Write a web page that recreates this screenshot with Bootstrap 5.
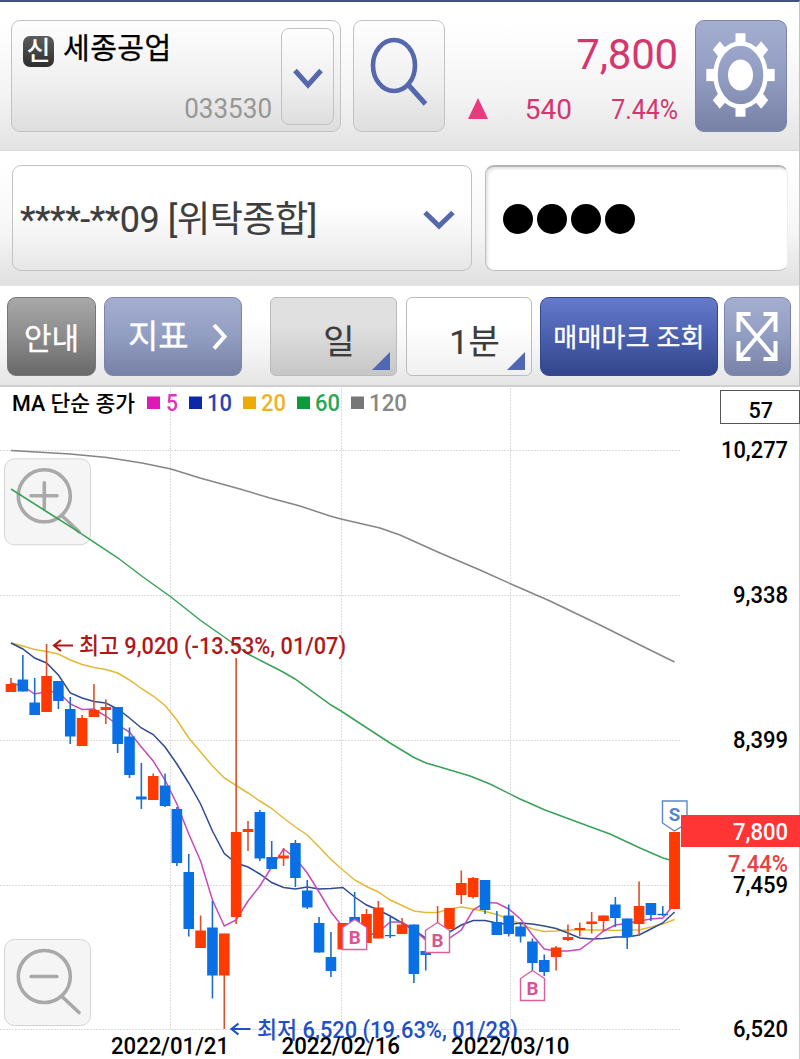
<!DOCTYPE html>
<html lang="ko">
<head>
<meta charset="utf-8">
<meta name="viewport" content="width=device-width, initial-scale=1">
<title>세종공업 차트</title>
<link href="https://cdn.jsdelivr.net/npm/bootstrap@5.3.0/dist/css/bootstrap.min.css" rel="stylesheet">
<style>
body{width:800px;height:1059px;overflow:hidden;background:#fff;font-family:Roboto,"Noto Sans CJK KR",sans-serif;color:#000;line-height:1}
.bar{border-right:1px solid #c4c4c4}
.bar-quote{height:150px;border-top:2px solid #44517f;padding:18px 12px 0 11px;gap:12px;background:linear-gradient(#fff 15%,#f3f3f3 65%,#e3e3e3)}
.bar-account{height:135px;border-top:1px solid #d8d8d8;padding:14px 11px 0 12px;background:linear-gradient(#fff 10%,#f6f6f6 60%,#e0e0e0)}
.bar-tools{height:102px;border-top:1px solid #e6e6e6;border-bottom:2px solid #d0d0d0;padding:11px 9px 0 7px;background:linear-gradient(#fff 30%,#f5f5f5 65%,#e4e4e4)}
.soft{border:1px solid #c2c2c2;border-radius:9px;background:linear-gradient(#fefefe,#f0f0f0 55%,#dedede);padding:0;flex:none}
.stock{width:330px;height:112px;padding:7px 6px 7px 11px}
.tag-new{width:31px;height:31px;border-radius:7px;background:linear-gradient(#5c5c5c,#2e2e2e);color:#fff;font-size:26px;line-height:31px;margin-top:8px;font-weight:500}
.stock-title{font-size:29px;line-height:42px;letter-spacing:.5px;margin-left:9px;-webkit-text-stroke:.3px #000}
.stock-code{font-size:27px;line-height:28px;color:#979797;transform:scaleX(.965);transform-origin:right;margin-right:9px;margin-bottom:1px}
.drop{width:53px;height:97px;border-radius:8px}
.find{width:92px;height:112px}
.price{width:226px;height:112px;color:#d4376f;padding-right:5px;flex:none}
.price-now{font-size:42px;line-height:42px;margin-top:14px;letter-spacing:-.2px}
.price-sub{font-size:28px;line-height:28px;margin-top:20px}
.rise{margin-left:11px;margin-bottom:3px}
.pct{transform:scaleX(.89);transform-origin:right;display:inline-block}
.steel{border:1px solid #7b86af;background:linear-gradient(#a3aed0,#929dc2 50%,#7881a6);color:#fff;border-radius:9px;padding:0;flex:none}
.gear{width:92px;height:112px}
.account{width:460px;height:106px;background:linear-gradient(#fff 40%,#f3f3f3 70%,#e6e6e6);padding:0 16px 0 7px;color:#3e3e3e;font-size:36px}
.account-name{letter-spacing:-.45px;padding-top:3px;-webkit-text-stroke:.15px #3e3e3e}
.pin{width:303px;height:106px;margin-left:13px;border:1px solid #bdbdbd;border-right-color:#eee;border-top:2px solid #b4b4b4;border-radius:9px;background:#fff;padding-left:17px;gap:4px;box-shadow:inset 2px 2px 3px #e4e4e4}
.dot{width:30px;height:30px;background:#000;border-radius:50%}
.tool{height:79px;border-radius:9px;color:#fff;font-size:30px;padding:0;flex:none}
.info{width:89px;border:1px solid #777;background:linear-gradient(#a9a9a9,#8b8b8b 50%,#696969)}
.indi{width:138px;margin-left:8px}
.day{width:127px;margin-left:28px;border-radius:6px;border:1px solid #bbb;background:linear-gradient(#e0e0e0 35%,#c6c6c6);color:#3c3c3c;font-size:34px}
.minute{width:126px;margin-left:9px;border-radius:6px;border:1px solid #bbb;background:linear-gradient(#fff 35%,#f0f0f0);color:#3c3c3c;font-size:34px}
.day span,.minute span{display:inline-block;padding:11px 0 0 11px;-webkit-text-stroke:.2px #3c3c3c}
.corner{right:6px;bottom:5px;width:18px;height:18px;background:#5068b4;clip-path:polygon(100% 0,100% 100%,0 100%)}
.marks{width:178px;margin-left:8px;border:1px solid #34488e;background:linear-gradient(#657acb,#4a5fae 50%,#32458b)}
.marks span{font-size:26px;letter-spacing:.2px;-webkit-text-stroke:.35px #fff}
.t-info,.t-indi{-webkit-text-stroke:.3px #fff}
.t-info{display:inline-block;padding-top:3px}
.full{width:67px;margin-left:6px}
#chart{height:672px;width:800px}
#chart text{font-family:Roboto,"Noto Sans CJK KR",sans-serif;font-weight:500}
</style>
<script src="https://cdn.jsdelivr.net/npm/bootstrap@5.3.0/dist/js/bootstrap.bundle.min.js"></script>
</head>
<body class="d-flex flex-column">
<header class="bar bar-quote d-flex flex-shrink-0">
  <div class="soft stock d-flex">
    <div class="d-flex flex-column flex-grow-1">
      <div class="d-flex"><span class="tag-new text-center">신</span><span class="stock-title">세종공업</span></div>
      <span class="stock-code ms-auto mt-auto">033530</span>
    </div>
    <button class="btn soft drop d-flex align-items-center justify-content-center" aria-label="종목 목록"><svg class="mt-1" width="32" height="24" viewBox="0 0 32 24" fill="none" stroke="#5568ad" stroke-width="5"><path d="M3 3.500 16 18 29 3.500"/></svg></button>
  </div>
  <button class="btn soft find" aria-label="검색"><svg width="90" height="110" viewBox="354 21 90 110" fill="none" stroke="#5568ad" stroke-width="4.600"><ellipse cx="394" cy="65.500" rx="21" ry="25.500"/><path d="M408 84.500 425.500 104" stroke-width="5"/></svg></button>
  <div class="price d-flex flex-column">
    <div class="price-now text-end">7,800</div>
    <div class="price-sub d-flex align-items-center"><svg width="20" height="21" class="rise" viewBox="0 0 20 21"><path d="M10 0 20 21H0z" fill="#e93a7e"/></svg><span class="ms-auto" style="margin-right:31px">540</span><span class="pct">7.44%</span></div>
  </div>
  <button class="btn steel gear" aria-label="설정"><svg width="90" height="110" viewBox="696 21 90 110" fill="#fff"><g id="teeth"></g><ellipse cx="740.500" cy="75" rx="25" ry="31.500" fill="none" stroke="#fff" stroke-width="4.500"/><ellipse cx="740.500" cy="75" rx="12.500" ry="15.500"/></svg></button>
</header>
<section class="bar bar-account d-flex flex-shrink-0">
  <div class="soft account d-flex align-items-center justify-content-between"><span class="account-name">****-**09 [위탁종합]</span><svg class="mt-1" width="32" height="22" viewBox="0 0 32 22" fill="none" stroke="#5568ad" stroke-width="5"><path d="M2 3.500 16 17 30 3.500"/></svg></div>
  <div class="pin d-flex align-items-center flex-shrink-0"><i class="dot"></i><i class="dot"></i><i class="dot"></i><i class="dot"></i></div>
</section>
<nav class="bar bar-tools d-flex flex-shrink-0">
  <button class="btn tool info"><span class="t-info">안내</span></button>
  <button class="btn steel tool indi d-flex align-items-center"><span class="t-indi" style="margin-left:23px;font-size:33px">지표</span><svg class="ms-auto" style="margin-right:14px" width="15" height="28" viewBox="0 0 15 28" fill="none" stroke="#fff" stroke-width="4"><path d="M2 2 12.500 13.500 2 25.500"/></svg></button>
  <button class="btn tool day position-relative"><span>일</span><i class="corner position-absolute"></i></button>
  <button class="btn tool minute position-relative"><span>1분</span><i class="corner position-absolute"></i></button>
  <button class="btn tool marks"><span>매매마크 조회</span></button>
  <button class="btn steel tool full" aria-label="전체화면"><svg width="65" height="77" viewBox="724.500 298 65 77" fill="none" stroke="#fff" stroke-width="4"><path d="M738 315 775 359M775 315 738 359M738 332V314H750M763 314H775V332M738 341V359H750M763 359H775V341"/></svg></button>
</nav>
<main class="flex-shrink-0"><svg id="chart" class="d-block" viewBox="0 387 800 672"></svg></main>
<script>
const R='#ff3a00',B='#0870e4',x=i=>11+11.85*i;
// [body top, body bottom, high, low, colour]
const candles=[[684,692,678,692,R],[679.5,691.5,655,691.5,B],[702.5,715,678,715,B],[676,712,644,712,R],[681,701,681,709,B],[709,736.5,697,744,B],[718,746,715,746,R],[710,717,684,717,R],[707,710,699.5,724,R],[707,744,707,753,B],[736.5,775,727.5,778,B],[796.5,799.5,763,809,B],[776,800,773.5,800,R],[785.5,806,773.5,807,B],[809,863,807,866,B],[872,929,854,936.5,B],[930.5,948,915.5,948,R],[927.5,975.5,901,998.5,B],[933.5,975.5,933.5,1029,R],[832,917,658,924,R],[829,832,821,851,R],[812,858.5,810,861,B],[857,869,841,869,B],[855.5,858.5,848,866,R],[843,878,840,887,B],[890.5,907.5,880,909,B],[923,952.5,917,952.5,B],[957,971,932,977,B],[923,949.5,923,949.5,R],[917,935,892,940,B],[914,943,909,943,R],[907.5,938.5,901,938.5,R],[935,936.2,917,938,B],[924.5,934,918,934,R],[924.5,974,924.5,983,B],[951,955,945,970.5,B],[925,940,906,940,R],[908,929,908,929,R],[883,895,870.5,904,R],[878,897,877,898.5,R],[880,910,880,914,B],[922,935,911,935,B],[915.5,934,904.5,936.5,B],[926.5,936.5,924,942.5,B],[941.5,963,938.5,972,B],[960,972,954.5,976,B],[947.5,957,946,970.5,R],[937,940,924.5,941,R],[928,930,922.5,936.5,R],[921.5,924,912,933.5,R],[915.5,921,915.5,932,R],[904.5,918,897,927,B],[918.5,937,918.5,949,B],[906,924,881.5,936,R],[903,915,903,921,B],[913.8,915.2,906,916,B],[832,909,832,909,R]];
const ma5=[683,686,694,691.5,692,704,709.5,709,716,725,732,747,761,780,804,834,861,900,926,920,901,886,867,849,858,873,892,912,927,935,936,932,922,922,930,940,945,938,930,910,902.5,903,909,919,935,949,951,951,949.5,941,931,925,923.5,921,919,918,904];
const ma10=[643,649,658,663,675,693,698,701.5,703,709,718,728,734.5,747,764,783,804,831,853.5,863,867,874,882.5,887.5,889,887,889,888.5,887.5,897,905,910,916,923,930,938,940,932,925,920.5,920.5,923,924.5,923,924,926,928.5,933,938,939,938.5,937,937,935,929,923,912];
const ma20=[643,646,649.5,651.5,654,660,664.5,667.5,669.5,673,680,688.5,696,705.5,720,738,752,766,778,785.5,793,801,808.5,818,827,835,847,859.5,870,880,886.5,892,900,905.5,911,912.5,912.5,909,907,909,911.5,914.5,919,924,929,931.5,931,930,930,930,930,930.5,930,930,927,924,919.5];
const ma60='11,489 44,510 79,532 83,535 118,558 143,577 171,597 200,620 227,639 248,654 283,672 295,679 331,705 341,711 367,728 390,743 414,757.5 426,763 440,767 470,776 490,784 520,799 545,810 580,823 610,834 640,848 663,858 670,860';
const ma120='11,450.500 70,454 107,457.500 142,463 171,469 200,478 240,489 270,498 300,506 330,516 341,519 380,528 400,535 440,553 480,570 511,584 550,601 600,625 640,645 674.500,662';
const line=(pts,c)=>`<polyline points="${pts}" fill="none" stroke="${c}" stroke-width="1.500"/>`;
const series=(a,c)=>line(a.map((v,i)=>x(i)+','+v).join(' '),c);
const txt=(s,l,y,w,size,c,extra='')=>`<text x="${l}" y="${y}" textLength="${w}" lengthAdjust="spacingAndGlyphs" font-size="${size}" fill="${c}" ${extra}>${s}</text>`;
let o='';
for(const gy of [450.5,595.5,740.5,885.5,1029.5]) o+=`<path d="M0 ${gy}H681" stroke="#dcdcdc" stroke-dasharray="2 1"/>`;
for(const gx of [170.5,341.5,510.5]) o+=`<path d="M${gx} 388V1029" stroke="#dcdcdc" stroke-dasharray="2 1"/>`;
const lens=(y,plus)=>`<g><rect x="4.500" y="${y}" width="86" height="86" rx="10" fill="#ededed" fill-opacity=".55" stroke="#d4d4d4"/><g fill="none" stroke="#a9a9a9" stroke-width="3.600" stroke-linecap="round"><circle cx="44.300" cy="${y+37}" r="26"/><path d="M31 ${y+37}H57${plus?`M44.300 ${y+24}v26`:''}M62 ${y+57} 79 ${y+73}"/></g></g>`;
o+=lens(458.8,true)+lens(939.5,false);
o+=line(ma120,'#858585')+line(ma60,'#38a257')+series(ma20,'#e3b935')+series(ma10,'#304a91')+series(ma5,'#c64abb');
candles.forEach(([t,b,h,l,c],i)=>{o+=`<path d="M${x(i)} ${h}V${l}" stroke="${c===R?'#d9512b':'#1b70c6'}" stroke-width="1.600"/><rect x="${x(i)-5.3}" y="${t}" width="10.600" height="${b-t}" fill="${c}"/>`});
const buy=(cx,y)=>`<path d="M${cx-12} ${y+8} ${cx} ${y} ${cx+12} ${y+8}V${y+30}H${cx-12}z" fill="#fff" stroke="#dc5f9d" stroke-width="1.400"/>`+txt('B',cx-5.9,y+24,12,18.5,'#dc5291','style="font-weight:700"');
o+=buy(354.7,919.5)+buy(437.5,922.5)+buy(532.5,970.5);
o+=`<path d="M662.500 801H687V823L674.500 831 662.500 823z" fill="#fff" stroke="#6087c9" stroke-width="1.400"/>`+txt('S',668.7,821,11.5,19,'#5584cf','style="font-weight:700"');
o+=`<rect x="669.300" y="832" width="10.500" height="77" fill="${R}"/><rect x="681" y="815" width="119" height="32" fill="#ff3434"/>`;
o+=txt('7,800',733,840,55,23,'#fff')+txt('7.44%',728,872,60,23,'#e24343');
[['10,277',721,458,67],['9,338',733,603,55],['8,399',733,747.5,55],['7,459',733,892.5,55],['6,520',733,1036.5,55]].forEach(a=>o+=txt(a[0],a[1],a[2],a[3],23,'#000'));
o+=`<rect x="720.500" y="390.500" width="79" height="33" fill="#fff" stroke="#555"/>`+txt('57',748.5,418,24.5,22.5,'#000');
o+=txt('MA 단순 종가',12,411,123,22,'#000');
[[147,'#dd1ab5','5',166,12],[189,'#0a28a9','10',207,25],[243,'#edaa07','20',261,25],[297,'#0c9b3b','60',315,25],[351,'#777','120',369,38]].forEach(a=>{o+=`<rect x="${a[0]}" y="396.500" width="13" height="12.500" fill="${a[1]}"/>`+txt(a[2],a[3],411,a[4],23,a[1],'opacity=".88"')});
const arrow=(l,y,c)=>`<path d="M${l+20} ${y}H${l+1}M${l+8} ${y-5.5} ${l+1} ${y} ${l+8} ${y+5.5}" fill="none" stroke="${c}" stroke-width="2.200"/>`;
o+=arrow(53,645.5,'#b01818')+txt('최고 9,020 (-13.53%, 01/07)',79,654,267,23,'#b01818');
o+=arrow(230.5,1029,'#1e50c8')+txt('최저 6,520 (19.63%, 01/28)',257,1037.5,261,23,'#1e50c8');
o+=txt('2022/01/21',111,1054,118,23,'#000')+txt('2022/02/16',281.5,1054,118.5,23,'#000')+txt('2022/03/10',451,1054,118.5,23,'#000');
o+='<path d="M799.500 424V815M799.500 847V1059" stroke="#ccc"/>';
document.getElementById('chart').innerHTML=o;
// gear teeth sit on an ellipse that is taller than it is wide
document.getElementById('teeth').innerHTML=`<g transform="translate(740.500 75) scale(1 1.220)">${[0,45,90,135,180,225,270,315].map(a=>`<rect x="-5" y="-34.200" width="10" height="10" transform="rotate(${a})"/>`).join('')}</g>`;
</script>
</body>
</html>
